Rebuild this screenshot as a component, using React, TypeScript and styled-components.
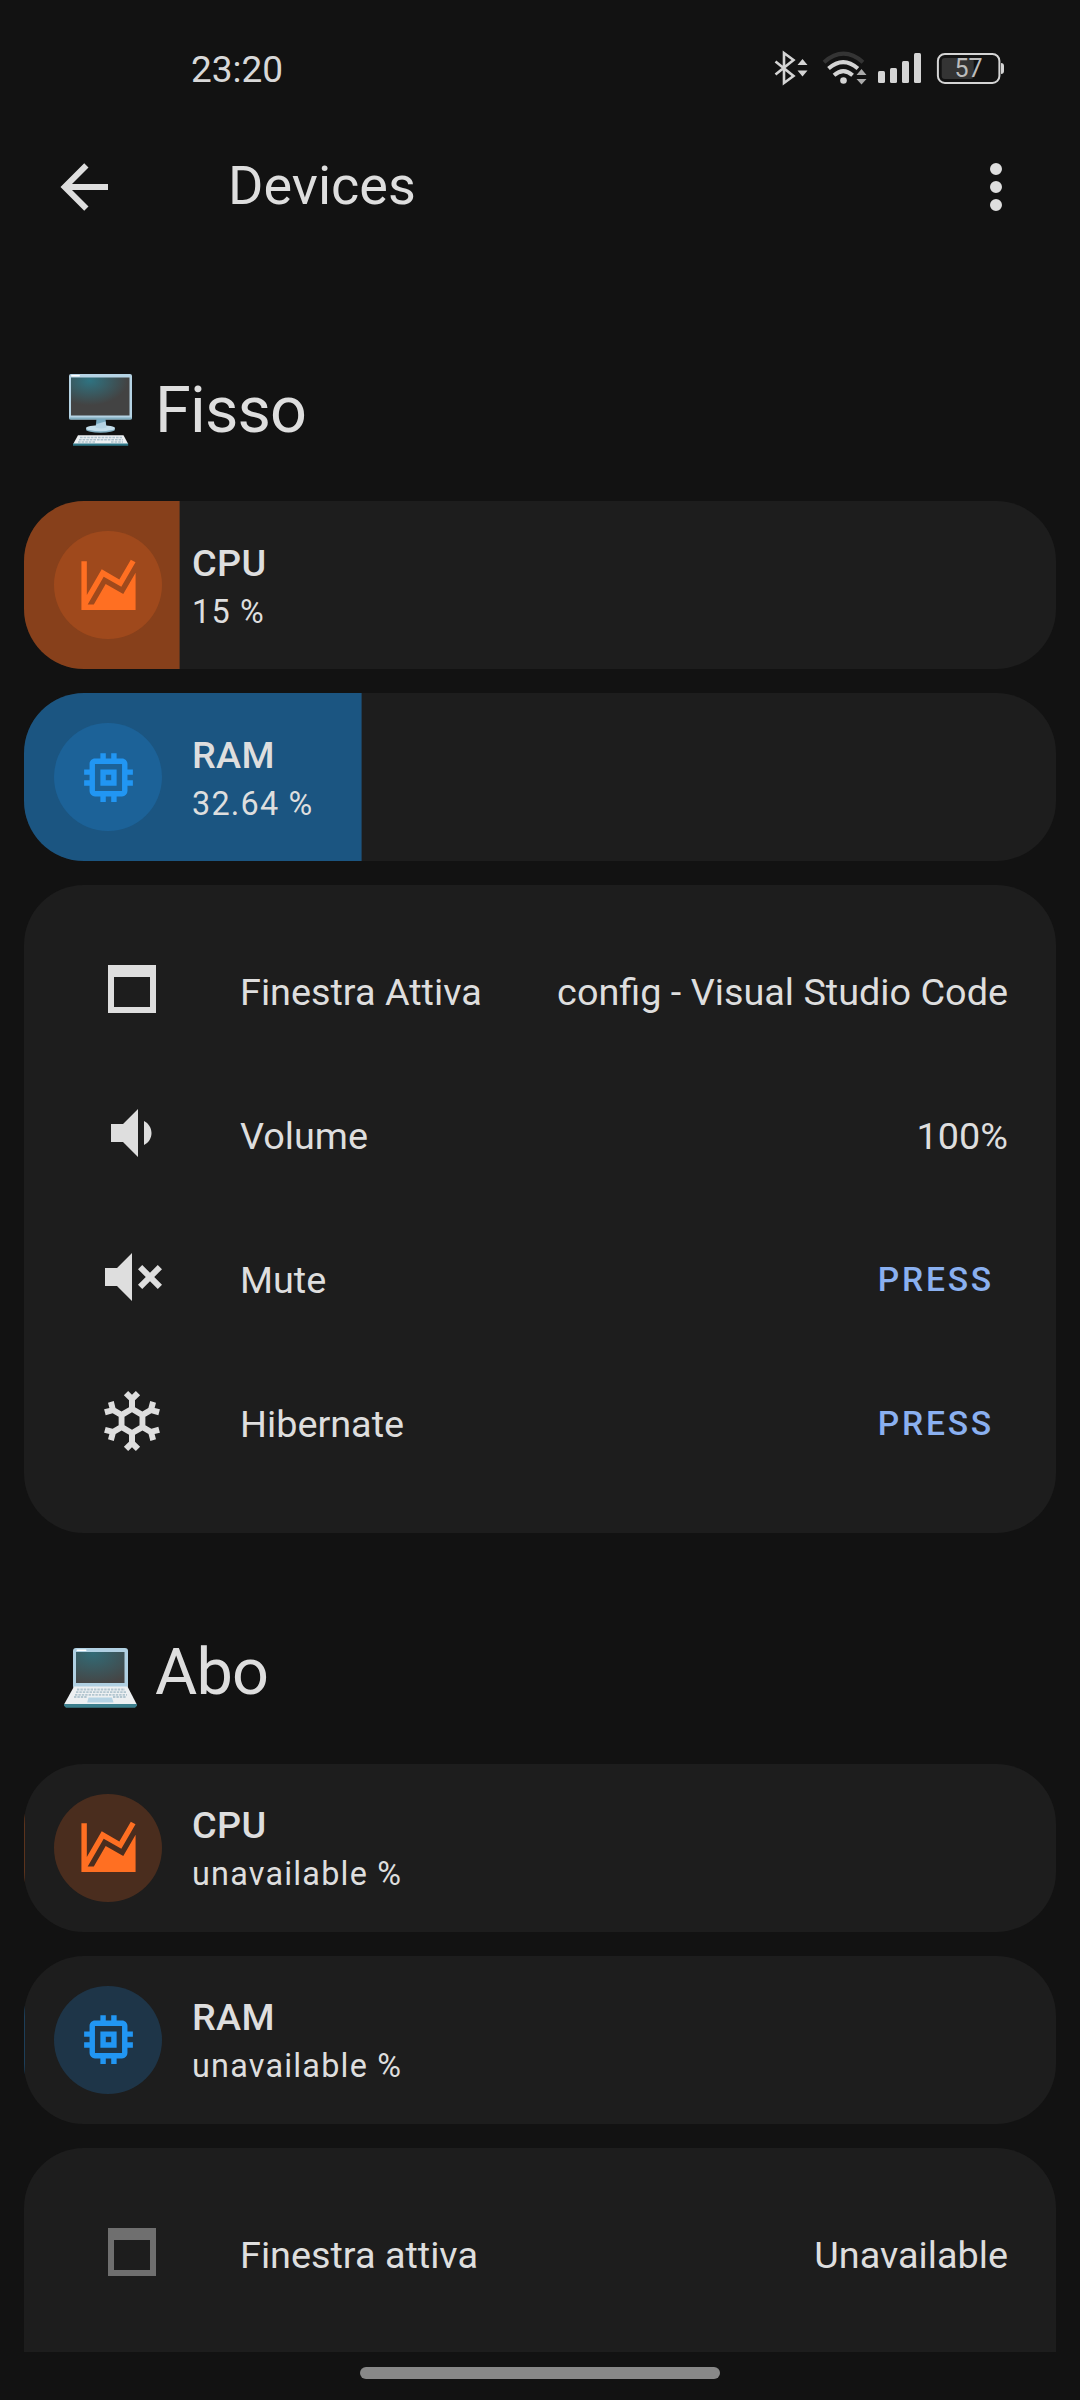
import React from "react";
import styled, { createGlobalStyle } from "styled-components";

const Global = createGlobalStyle`
  body { margin: 0; background: #121212; }
  * { box-sizing: border-box; }
`;

const Screen = styled.div`
  width: 1080px;
  height: 2400px;
  display: flex;
  flex-direction: column;
  background: #121212;
  color: #dedede;
  font-family: Roboto, "Noto Sans", sans-serif;
  overflow: hidden;
`;

const StatusBar = styled.header`
  height: 136px;
  flex: none;
  display: flex;
  justify-content: space-between;
  padding: 0 72px 0 191px;
`;

const Clock = styled.time`
  font-size: 37px;
  line-height: 42px;
  margin-top: 49px;
  color: #d8d8d8;
`;

const StatusIcons = styled.svg`
  width: 240px;
  height: 40px;
  margin-top: 48px;
  display: block;
`;

const Toolbar = styled.nav`
  height: 102px;
  flex: none;
  display: flex;
  align-items: center;
  padding: 0 48px;
`;

const Title = styled.h1`
  flex: 1;
  margin: -2px 0 0 108px;
  font-size: 54px;
  line-height: 64px;
  font-weight: 400;
`;

const Icon = styled.svg<{ $size?: number }>`
  width: ${(p) => p.$size ?? 72}px;
  height: ${(p) => p.$size ?? 72}px;
  display: block;
  flex: none;
  fill: currentColor;
`;

const Content = styled.main`
  height: 2114px;
  flex: none;
  overflow: hidden;
  padding: 0 24px;
`;

const Section = styled.section`
  display: flex;
  flex-direction: column;
  gap: 24px;
`;

const Heading = styled.h2<{ $height: number; $baselinePad: number }>`
  height: ${(p) => p.$height}px;
  margin: 0;
  padding: ${(p) => p.$baselinePad}px 0 0 36px;
  display: flex;
  align-items: flex-start;
  gap: 15px;
  font-size: 64.8px;
  line-height: 76px;
  font-weight: 400;
  letter-spacing: -0.013em;
`;

const Emoji = styled.svg`
  width: 80px;
  height: 76px;
  display: block;
`;

const MeterCard = styled.article`
  height: 168px;
  display: grid;
  border-radius: 60px;
  background: #1d1d1d;
  overflow: hidden;
`;

const MeterFill = styled.div<{ $rgb: string; $fill: string }>`
  grid-area: 1 / 1;
  height: 168px;
  background: ${(p) => p.$fill};
  background-clip: padding-box;
  border-right: 1px solid rgba(${(p) => p.$rgb}, 0.28);
`;

const MeterBody = styled.div`
  grid-area: 1 / 1;
  display: flex;
  align-items: center;
  gap: 30px;
  padding: 0 30px;
`;

const Badge = styled.div<{ $rgb: string; $raised?: boolean }>`
  width: 108px;
  height: 108px;
  padding: ${(p) => (p.$raised ? "0 0 1px 1px" : "1px 0 0 1px")};
  border-radius: 50%;
  display: grid;
  place-items: center;
  color: rgb(${(p) => p.$rgb});
  background: rgba(${(p) => p.$rgb}, 0.2);
`;

const MeterText = styled.div<{ $raised?: boolean }>`
  display: flex;
  flex-direction: column;
  padding-top: ${(p) => (p.$raised ? 0 : 2)}px;
`;

const Primary = styled.span`
  font-size: 37.8px;
  font-weight: 500;
  line-height: 52px;
  letter-spacing: 0.3px;
`;

const Secondary = styled.span`
  font-size: 32.4px;
  line-height: 46px;
  letter-spacing: 1.2px;
`;

const EntitiesCard = styled.article<{ $minHeight?: number }>`
  display: flex;
  flex-direction: column;
  gap: 24px;
  min-height: ${(p) => p.$minHeight ?? 0}px;
  padding: 48px;
  border-radius: 60px;
  background: #1d1d1d;
`;

const EntityRow = styled.div`
  height: 120px;
  display: flex;
  align-items: center;
  font-size: 37.8px;
  line-height: 42px;
`;

const EntityIcon = styled.div<{ $off?: boolean }>`
  width: 120px;
  padding: 0 24px 8px;
  color: ${(p) => (p.$off ? "#6f6f6f" : "#dedede")};
`;

const EntityName = styled.span`
  flex: 1;
  margin-left: 48px;
  padding-bottom: 2px;
`;

const EntityState = styled.span`
  padding-bottom: 2px;
`;

const PressButton = styled.button`
  border: 0;
  padding: 0 14px 2px 24px;
  background: none;
  color: #8ab0f0;
  font: 500 33.6px/40px Roboto, sans-serif;
  letter-spacing: 2.8px;
`;

const NavBar = styled.footer`
  flex: 1;
  display: flex;
  justify-content: center;
  padding-top: 15px;
`;

const NavPill = styled.div`
  width: 360px;
  height: 12px;
  border-radius: 6px;
  background: #888;
`;

const paths = {
  back: "M20,11V13H8L13.5,18.5L12.08,19.92L4.16,12L12.08,4.08L13.5,5.5L8,11H20Z",
  dots: "M12,16A2,2 0 0,1 14,18A2,2 0 0,1 12,20A2,2 0 0,1 10,18A2,2 0 0,1 12,16M12,10A2,2 0 0,1 14,12A2,2 0 0,1 12,14A2,2 0 0,1 10,12A2,2 0 0,1 12,10M12,4A2,2 0 0,1 14,6A2,2 0 0,1 12,8A2,2 0 0,1 10,6A2,2 0 0,1 12,4Z",
  chart: "M17.45,15.18L22,7.31V19L22,21H2V3H4V15.54L9.5,6L16,9.78L20.24,2.45L21.97,3.45L16.74,12.5L10.23,8.75L4.31,19H6.57L10.96,11.44L17.45,15.18Z",
  memory: "M17,17H7V7H17M21,11V9H19V7C19,5.89 18.1,5 17,5H15V3H13V5H11V3H9V5H7C5.89,5 5,5.89 5,7V9H3V11H5V13H3V15H5V17A2,2 0 0,0 7,19H9V21H11V19H13V21H15V19H17A2,2 0 0,0 19,17V15H21V13H19V11M13,13H11V11H13M15,9H9V15H15V9Z",
  window: "M4,4H20V20H4V4M6,8V18H18V8H6Z",
  volume: "M5,9V15H9L14,20V4L9,9M18.5,12C18.5,10.23 17.5,8.71 16,7.97V16C17.5,15.29 18.5,13.76 18.5,12Z",
  mute: "M3,9H7L12,4V20L7,15H3V9M16.59,12L14,9.41L15.41,8L18,10.59L20.59,8L22,9.41L19.41,12L22,14.59L20.59,16L18,13.41L15.41,16L14,14.59L16.59,12Z",
  snowflake: "M20.79,13.95L18.46,14.57L16.46,13.44V10.56L18.46,9.43L20.79,10.05L21.31,8.12L19.54,7.65L20,5.88L18.07,5.36L17.45,7.69L15.45,8.82L13,7.38V5.12L14.71,3.41L13.29,2L12,3.29L10.71,2L9.29,3.41L11,5.12V7.38L8.5,8.82L6.5,7.69L5.92,5.36L4,5.88L4.47,7.65L2.7,8.12L3.22,10.05L5.55,9.43L7.55,10.56V13.45L5.55,14.58L3.22,13.96L2.7,15.89L4.47,16.36L4,18.12L5.93,18.64L6.55,16.31L8.55,15.18L11,16.62V18.88L9.29,20.59L10.71,22L12,20.71L13.29,22L14.7,20.59L13,18.88V16.62L15.5,15.17L17.5,16.3L18.12,18.63L20,18.12L19.53,16.35L21.3,15.88L20.79,13.95M9.5,10.56L12,9.11L14.5,10.56V13.44L12,14.89L9.5,13.44V10.56Z",
};

const Glyph = ({ name, size }: { name: keyof typeof paths; size?: number }) => (
  <Icon viewBox="0 0 24 24" $size={size}>
    <path fillRule="evenodd" d={paths[name]} />
  </Icon>
);

const Desktop = () => (
  <Emoji viewBox="0 0 80 76">
    <defs>
      <radialGradient id="deskScreen" cx="0.32" cy="0.08" r="0.65">
        <stop offset="0" stopColor="#2f7381" />
        <stop offset="1" stopColor="#434343" />
      </radialGradient>
    </defs>
    <rect x="9" y="2" width="63" height="45.5" rx="2" fill="#b5d3e4" />
    <rect x="9" y="45.5" width="63" height="2" rx="1" fill="#82aec0" />
    <rect x="11" y="5.5" width="58.5" height="38" fill="url(#deskScreen)" />
    <rect x="11" y="3" width="9" height="1.6" rx="0.8" fill="#fff" />
    <path d="M36.5 47h9l1 9h-11z" fill="#78a9bf" />
    <ellipse cx="40.5" cy="57.5" rx="14.5" ry="3.3" fill="#82aec0" />
    <ellipse cx="40.5" cy="56.2" rx="14.5" ry="3" fill="#c5dfec" />
    <path d="M36.5 52l9-2.500 1 6q-5.500 2-11 0z" fill="#b5d3e4" />
    <path d="M18 63.300h45.500l4.700 8.700H13.200z" fill="#eef1f3" />
    <path d="M13 71.500h55.200v2.200H13z" fill="#2f7889" />
    <g stroke="#adc3ce" strokeWidth="1.500" strokeDasharray="2.600 1">
      <path d="M20 65.600h42M19 67.800h44M18 70h18M51 70h12" />
    </g>
  </Emoji>
);

const Laptop = () => (
  <Emoji viewBox="0 -6 80 76">
    <defs>
      <radialGradient id="lapScreen" cx="0.35" cy="0.05" r="1">
        <stop offset="0" stopColor="#326b76" />
        <stop offset="1" stopColor="#454545" />
      </radialGradient>
    </defs>
    <rect x="13" y="8" width="55" height="41" rx="3" fill="#b0d0e2" />
    <rect x="16" y="12" width="48.500" height="31" fill="url(#lapScreen)" />
    <rect x="16.500" y="9.500" width="10" height="1.500" rx="0.700" fill="#fff" />
    <path d="M14 46.500h53.500l9.300 18H4z" fill="#edf0f2" />
    <path d="M4 64h73v1.800l-2 1.900H6l-2-1.900z" fill="#3c7f8d" />
    <g stroke="#b3c6d0" strokeWidth="1.800" strokeDasharray="2.400 1">
      <path d="M17 49.500h48M16 52.200h50M15 54.900h52M14 57h13M53 57h13" />
    </g>
    <path d="M28.500 57.500H52l1.500 5H27.200z" fill="#b5d3e4" />
  </Emoji>
);

const Status = () => (
  <StatusIcons viewBox="0 0 240 40" fill="#d4d4d4">
    <path d="M7.500 13.500 25.500 28 16 35V5L25.500 12 7.500 26.500" fill="none" stroke="#d4d4d4" strokeWidth="2.600" />
    <path d="M29.500 17l5-6 5 6zM29.500 22.500l5 6 5-6z" />
    <g fill="none" strokeWidth="4">
      <path d="M56 14.200q19.500-17 39 0" stroke="#343434" />
      <path d="M60.500 20.600q14.700-13 29.400 0" stroke="#d4d4d4" />
      <path d="M66 27.200q9.300-8.200 18.600 0" stroke="#d4d4d4" />
    </g>
    <circle cx="75.500" cy="32.500" r="3.300" />
    <path d="M88.500 27l5-6 5 6zM88.500 31l5 5.500 5-5.500z" fill="#aaa" />
    <rect x="110" y="23" width="7" height="12" rx="1.500" />
    <rect x="122" y="20" width="7" height="15" rx="1.500" />
    <rect x="134" y="13" width="7" height="22" rx="1.500" />
    <rect x="146" y="5" width="7" height="30" rx="1.500" />
    <rect x="169.900" y="5.900" width="61.500" height="29" rx="7" fill="none" stroke="#d4d4d4" strokeWidth="2" />
    <rect x="173.700" y="10" width="32" height="21" rx="3" fill="#343434" />
    <path d="M233 15q3 0 3 3v5q0 3-3 3z" />
    <text x="200.500" y="29.300" fontSize="25" textAnchor="middle" fill="#bcbcbc">57</text>
  </StatusIcons>
);

const ORANGE = { rgb: "255, 111, 34", fill: "#87401b" };
const BLUE = { rgb: "33, 150, 243", fill: "#1b5581" };

interface MeterProps {
  icon: "chart" | "memory";
  tone: { rgb: string; fill: string };
  name: string;
  state: string;
  value: number;
  raised?: boolean;
}

const Meter = ({ icon, tone, name, state, value, raised }: MeterProps) => (
  <MeterCard>
    <MeterFill
      $rgb={tone.rgb}
      $fill={tone.fill}
      style={{ width: Math.round((value / 100) * 1032) + 1 }}
    />
    <MeterBody>
      <Badge $rgb={tone.rgb} $raised={raised}>
        <Glyph name={icon} size={65} />
      </Badge>
      <MeterText $raised={raised}>
        <Primary>{name}</Primary>
        <Secondary>{state}</Secondary>
      </MeterText>
    </MeterBody>
  </MeterCard>
);

interface EntityProps {
  icon: keyof typeof paths;
  name: string;
  off?: boolean;
  children: React.ReactNode;
}

const Entity = ({ icon, name, off, children }: EntityProps) => (
  <EntityRow>
    <EntityIcon $off={off}>
      <Glyph name={icon} />
    </EntityIcon>
    <EntityName>{name}</EntityName>
    {children}
  </EntityRow>
);

export default function App() {
  return (
    <Screen>
      <Global />
      <StatusBar>
        <Clock>23:20</Clock>
        <Status />
      </StatusBar>
      <Toolbar>
        <Glyph name="back" />
        <Title>Devices</Title>
        <Glyph name="dots" />
      </Toolbar>
      <Content>
        <Section>
          <Heading $height={239} $baselinePad={134}>
            <Desktop />
            Fisso
          </Heading>
          <Meter icon="chart" tone={ORANGE} name="CPU" state="15 %" value={15} />
          <Meter icon="memory" tone={BLUE} name="RAM" state="32.64 %" value={32.64} />
          <EntitiesCard>
            <Entity icon="window" name="Finestra Attiva">
              <EntityState>config - Visual Studio Code</EntityState>
            </Entity>
            <Entity icon="volume" name="Volume">
              <EntityState>100%</EntityState>
            </Entity>
            <Entity icon="mute" name="Mute">
              <PressButton>PRESS</PressButton>
            </Entity>
            <Entity icon="snowflake" name="Hibernate">
              <PressButton>PRESS</PressButton>
            </Entity>
          </EntitiesCard>
        </Section>
        <Section>
          <Heading $height={207} $baselinePad={101}>
            <Laptop />
            Abo
          </Heading>
          <Meter icon="chart" tone={ORANGE} name="CPU" state="unavailable %" value={0} raised />
          <Meter icon="memory" tone={BLUE} name="RAM" state="unavailable %" value={0} raised />
          <EntitiesCard $minHeight={648}>
            <Entity icon="window" name="Finestra attiva" off>
              <EntityState>Unavailable</EntityState>
            </Entity>
          </EntitiesCard>
        </Section>
      </Content>
      <NavBar>
        <NavPill />
      </NavBar>
    </Screen>
  );
}
